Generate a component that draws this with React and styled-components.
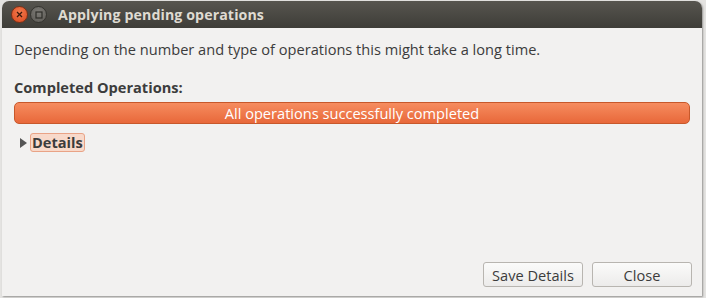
import React from "react";
import styled, { createGlobalStyle } from "styled-components";

const GlobalStyle = createGlobalStyle`
  html, body {
    margin: 0;
    padding: 0;
    background: #e4e3e1;
    font-family: "Open Sans", "Liberation Sans", sans-serif;
  }
`;

const Screen = styled.div`
  width: 706px;
  height: 298px;
  padding: 1px 4px 2px 2px;
  box-sizing: border-box;
  display: flex;
`;

const Window = styled.div`
  flex: 1;
  display: flex;
  flex-direction: column;
  background: #f2f1f0;
  border-radius: 7px 7px 0 0;
  overflow: hidden;
  box-shadow: 1px 1px 2px rgba(0, 0, 0, 0.35);
`;

const TitleBar = styled.div`
  height: 27px;
  display: flex;
  align-items: center;
  padding-left: 9px;
  gap: 2px;
  background: linear-gradient(#57554f, #3e3d38);
`;

const WinButton = styled.span`
  width: 17px;
  height: 17px;
  border-radius: 50%;
  display: flex;
  align-items: center;
  justify-content: center;
  background: ${p => (p.close ? "radial-gradient(circle at 50% 35%, #f47a4d, #d8491f)" : "radial-gradient(circle at 50% 35%, #7d7b76, #5b5954)")};
  border: 1px solid ${p => (p.close ? "#7d3117" : "#35342f")};
  box-sizing: border-box;
`;

const Title = styled.span`
  margin-left: 9px;
  color: #dfdbd2;
  font-weight: 700;
  font-size: 14.2px;
  letter-spacing: 0.1px;
`;

const Body = styled.div`
  flex: 1;
  display: flex;
  flex-direction: column;
  padding: 11px 10px 9px 12px;
  color: #3c3c3c;
  font-size: 14.6px;
`;

const Message = styled.div`
  line-height: 20px;
`;

const Label = styled.div`
  margin-top: 18px;
  font-weight: 700;
  line-height: 20px;
`;

const Progress = styled.div`
  margin: 5px 2px 0 0;
  height: 22px;
  border-radius: 5px;
  border: 1px solid #c7582b;
  box-sizing: border-box;
  background: linear-gradient(#f68c5f, #e8683a);
  color: #ffffff;
  display: flex;
  align-items: center;
  justify-content: center;
`;

const Expander = styled.div`
  margin-top: 9px;
  display: flex;
  align-items: center;
  gap: 3px;
  padding-left: 6px;
`;

const Arrow = styled.span`
  width: 0;
  height: 0;
  border-top: 5px solid transparent;
  border-bottom: 5px solid transparent;
  border-left: 7px solid #555;
`;

const ExpanderLabel = styled.span`
  font-weight: 700;
  padding: 0 1px;
  line-height: 17px;
  border-radius: 3px;
  background: #f8d9ca;
  border: 1px solid #e9a386;
`;

const Footer = styled.div`
  margin-top: auto;
  display: flex;
  justify-content: flex-end;
  gap: 9px;
`;

const Button = styled.button`
  width: ${p => p.w}px;
  height: 25px;
  border-radius: 3px;
  border: 1px solid #b8b5b0;
  background: linear-gradient(#fbfbfa, #ecebea);
  font-family: inherit;
  font-size: 14.6px;
  color: #3c3c3c;
  padding: 0;
`;

export default function App() {
  return (
    <>
      <GlobalStyle />
      <Screen>
        <Window>
          <TitleBar>
            <WinButton close>
              <svg width="7" height="7" viewBox="0 0 7 7">
                <path d="M1 1L6 6M6 1L1 6" stroke="#3b1a0c" strokeWidth="1.3" />
              </svg>
            </WinButton>
            <WinButton>
              <svg width="8" height="8" viewBox="0 0 8 8">
                <rect x="1" y="1" width="6" height="6" fill="none" stroke="#2e2d29" strokeWidth="1.2" />
              </svg>
            </WinButton>
            <Title>Applying pending operations</Title>
          </TitleBar>
          <Body>
            <Message>
              Depending on the number and type of operations this might take a long time.
            </Message>
            <Label>Completed Operations:</Label>
            <Progress>All operations successfully completed</Progress>
            <Expander>
              <Arrow />
              <ExpanderLabel>Details</ExpanderLabel>
            </Expander>
            <Footer>
              <Button w={100}>Save Details</Button>
              <Button w={100}>Close</Button>
            </Footer>
          </Body>
        </Window>
      </Screen>
    </>
  );
}
